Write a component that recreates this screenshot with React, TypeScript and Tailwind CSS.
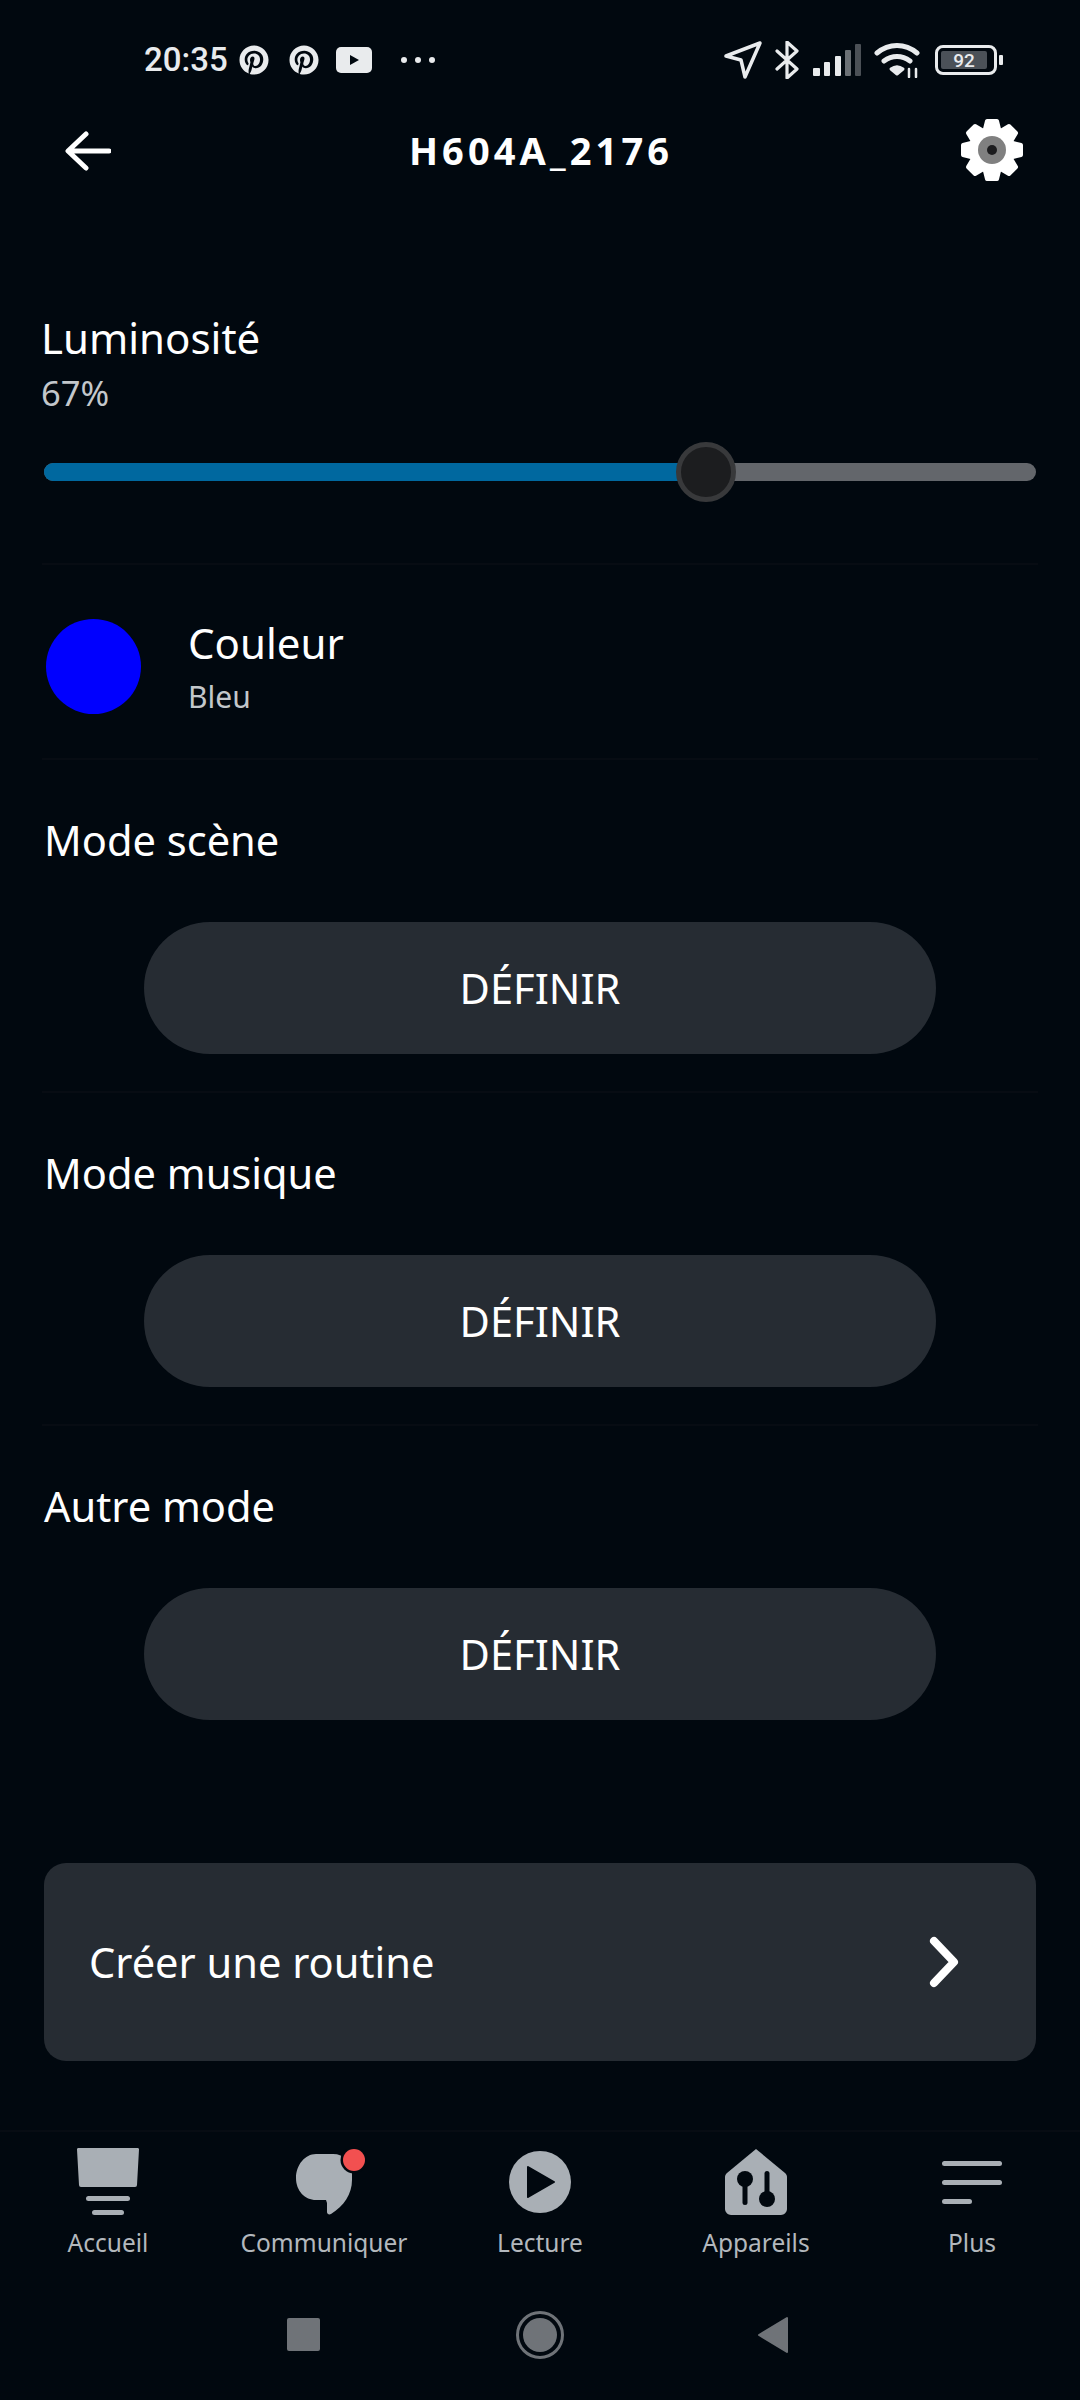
import { FaPinterest } from 'react-icons/fa'

const UI_FONT = "font-['Noto_Sans',sans-serif]"

function StatusBar() {
  return (
    <div className="h-[90px] pt-[30px] flex items-center text-[#e9ebed]">
      <span className="ml-[144px] w-[85px] font-['Roboto',sans-serif] font-medium text-[33px] leading-[60px]">20:35</span>
      <FaPinterest className="ml-[10px] w-[30px] h-[30px]" />
      <FaPinterest className="ml-[20px] w-[30px] h-[30px]" />
      <svg viewBox="0 0 36 26" className="ml-[17px] w-[36px] h-[26px]">
        <rect width="36" height="26" rx="5" fill="#e9ebed" />
        <path d="M14 8l9 5-9 5z" fill="#01080f" />
      </svg>
      <div className="ml-[29px] w-[34px] flex justify-between">
        <span className="w-[6px] h-[6px] rounded-full bg-[#e9ebed]" />
        <span className="w-[6px] h-[6px] rounded-full bg-[#e9ebed]" />
        <span className="w-[6px] h-[6px] rounded-full bg-[#e9ebed]" />
      </div>
      <svg viewBox="0 0 38 38" className="ml-[289px] w-[38px] h-[38px]" fill="none" stroke="#e9ebed" strokeWidth="3.5" strokeLinejoin="round">
        <path d="M2 15L36 2 21 36l-4-17z" />
      </svg>
      <svg viewBox="0 0 24 38" className="ml-[13px] w-[24px] h-[38px]" fill="none" stroke="#e9ebed" strokeWidth="3.2" strokeLinecap="round" strokeLinejoin="round">
        <path d="M2 10l20 18-10 9V1l10 9L2 28" />
      </svg>
      <svg viewBox="0 0 48 32" className="ml-[14px] w-[48px] h-[32px]">
        <rect x="0" y="24" width="7" height="8" rx="1" fill="#e9ebed" />
        <rect x="11" y="18" width="6" height="14" rx="1" fill="#e9ebed" />
        <rect x="22" y="12" width="6" height="20" rx="1" fill="#e9ebed" />
        <rect x="32" y="6" width="6" height="26" rx="1" fill="#6b7075" />
        <rect x="42" y="0" width="6" height="32" rx="1" fill="#4b5056" />
      </svg>
      <svg viewBox="0 0 46 36" className="ml-[13px] w-[46px] h-[36px]" fill="none" stroke="#e9ebed" strokeWidth="5" strokeLinecap="round">
        <path d="M3 11c12-10 28-10 40 0" />
        <path d="M10 19c8-6 18-6 26 0" />
        <path d="M17 27c4-3 8-3 12 0l-6 5z" fill="#e9ebed" strokeWidth="3" strokeLinejoin="round" />
        <path d="M35 27v8M42 27v8" strokeWidth="2.5" />
      </svg>
      <div className="ml-[15px] w-[62px] h-[30px] rounded-[8px] border-[3px] border-[#e9ebed] p-[3px] flex">
        <div className="w-[46px] bg-[#4b5158] rounded-[2px] flex items-center justify-center font-['Roboto',sans-serif] text-[#e9ebed] text-[19px] leading-none font-medium">92</div>
      </div>
      <span className="ml-[2px] w-[4px] h-[10px] rounded-[1px] bg-[#e9ebed]" />
    </div>
  )
}

function Gear() {
  const teeth = [0, 45, 90, 135, 180, 225, 270, 315]
  return (
    <svg viewBox="0 0 62 62" className="w-[62px] h-[62px]">
      {teeth.map((a) => (
        <path key={a} d="M26 2h10l3 12H23z" fill="#fff" stroke="#fff" strokeLinejoin="round" strokeWidth="4" transform={`rotate(${a} 31 31)`} />
      ))}
      <circle cx="31" cy="31" r="22" fill="#fff" />
      <circle cx="31" cy="31" r="14" fill="#808080" />
      <circle cx="31" cy="31" r="5" fill="#1c1c1e" />
    </svg>
  )
}

function Header() {
  return (
    <div className="h-[120px] pl-[65px] pr-[57px] flex items-center justify-between">
      <svg viewBox="0 0 46 40" className="w-[46px] h-[40px] mt-[2px]" fill="none" stroke="#fff" strokeWidth="5" strokeLinecap="round" strokeLinejoin="round">
        <path d="M44 20H4M21 3L3 20l18 17" />
      </svg>
      <h1 className="font-['Noto_Sans',sans-serif] text-white text-[38px] leading-none font-bold tracking-[4.1px] ml-[10px]">H604A_2176</h1>
      <Gear />
    </div>
  )
}

function Divider() {
  return <div className="h-[2px] mx-[42px] bg-[#070c13]" />
}

function Brightness() {
  return (
    <div className="h-[353px] px-[44px] pt-[103px]">
      <p className="-ml-[3px] text-white text-[42px] leading-[50px]">Luminosité</p>
      <p className="-ml-[3px] mt-[12px] text-[#c3c7cb] text-[34.5px] leading-[36px]">67%</p>
      <div className="relative mt-[52px] h-[18px] rounded-full bg-[#63666b]">
        <div className="h-full w-[660px] rounded-l-full bg-[#00689f]" />
        <div className="absolute left-[632px] top-[-21px] w-[60px] h-[60px] rounded-full bg-[#1c1d1f] border-[5px] border-[#38393b]" />
      </div>
    </div>
  )
}

function ColorRow() {
  return (
    <div className="h-[193px] pl-[46px] pt-[10px] flex items-center">
      <div className="w-[95px] h-[95px] rounded-full bg-[#0000ff]" />
      <div className="ml-[47px]">
        <p className="text-white text-[42px] leading-[50px]">Couleur</p>
        <p className="mt-[10px] text-[#c3c7cb] text-[30px] leading-[38px]">Bleu</p>
      </div>
    </div>
  )
}

function ModeSection({ title, last }: { title: string; last?: boolean }) {
  return (
    <div className={last ? 'pt-[50px]' : 'h-[331px] pt-[50px]'}>
      <p className="pl-[44px] text-white text-[41.6px] leading-[60px]">{title}</p>
      <button type="button" className="block mx-auto mt-[52px] w-[792px] h-[132px] rounded-full bg-[#262c33] text-white text-[41.6px]">
        DÉFINIR
      </button>
    </div>
  )
}

function NavItem({ label, children }: { label: string; children: React.ReactNode }) {
  return (
    <div className="flex flex-col items-center">
      <div className="h-[70px] flex items-center justify-center">{children}</div>
      <span className="mt-[10px] text-[#b3b8bd] text-[24.5px] leading-[32px]">{label}</span>
    </div>
  )
}

const NAV_GREY = '#a9afb5'

function BottomNav() {
  return (
    <div className="mt-[69px] h-[148px] border-t-2 border-[#070c13] pt-[15px] grid grid-cols-5">
      <NavItem label="Accueil">
        <svg viewBox="0 0 62 68" className="w-[62px] h-[68px]" fill={NAV_GREY}>
          <path d="M1.5 0h59a1.500 1.500 0 0 1 1.500 1.600L60 37a2 2 0 0 1-2 2H4a2 2 0 0 1-2-2L0 1.600A1.500 1.500 0 0 1 1.500 0z" />
          <rect x="9" y="48" width="44" height="5" rx="2.5" />
          <rect x="15" y="62" width="32" height="5" rx="2.5" />
        </svg>
      </NavItem>
      <NavItem label="Communiquer">
        <svg viewBox="0 0 70 66" className="w-[70px] h-[66px] ml-[14px]" fill={NAV_GREY}>
          <path d="M20 6h17c11 0 19 8 19 19v7c0 14-8 26-21 34-2 1-4 0-4-2v-9l-1-3H20C9 52 0 43 0 30S9 6 20 6z" transform="translate(0 -1)" />
          <circle cx="58" cy="11" r="13.500" fill="#01080f" />
          <circle cx="58" cy="11" r="11" fill="#f25050" />
        </svg>
      </NavItem>
      <NavItem label="Lecture">
        <svg viewBox="0 0 62 62" className="w-[62px] h-[62px]">
          <circle cx="31" cy="31" r="31" fill={NAV_GREY} />
          <path d="M19 16l26 15-26 15z" fill="#01080f" stroke="#01080f" strokeWidth="2" strokeLinejoin="round" />
        </svg>
      </NavItem>
      <NavItem label="Appareils">
        <svg viewBox="0 0 62 66" className="w-[62px] h-[66px]">
          <path d="M31 0l29 24c1 1 2 2 2 4v32c0 3-3 6-6 6H6c-3 0-6-3-6-6V28c0-2 1-3 2-4z" fill={NAV_GREY} />
          <circle cx="20" cy="30" r="8" fill="#01080f" />
          <rect x="17.500" y="30" width="5" height="26" rx="2.500" fill="#01080f" />
          <circle cx="42" cy="50" r="8" fill="#01080f" />
          <rect x="39.500" y="22" width="5" height="28" rx="2.500" fill="#01080f" />
        </svg>
      </NavItem>
      <NavItem label="Plus">
        <div className="w-[60px] flex flex-col gap-[14px]">
          <div className="h-[5px] rounded-full bg-[#a9afb5]" />
          <div className="h-[5px] rounded-full bg-[#a9afb5]" />
          <div className="h-[5px] w-[30px] rounded-full bg-[#a9afb5]" />
        </div>
      </NavItem>
    </div>
  )
}

function SystemNav() {
  return (
    <div className="relative flex-1">
      <div className="absolute left-[287px] top-[40px] w-[33px] h-[33px] rounded-[2px] bg-[#6f7378]" />
      <div className="absolute left-[516px] top-[33px] w-[48px] h-[48px] rounded-full border-[3px] border-[#6f7378] p-[4px]">
        <div className="w-full h-full rounded-full bg-[#6f7378]" />
      </div>
      <svg viewBox="0 0 32 38" className="absolute left-[757px] top-[38px] w-[32px] h-[38px]">
        <path d="M2 19L30 2v34z" fill="#6f7378" stroke="#6f7378" strokeWidth="2" strokeLinejoin="round" />
      </svg>
    </div>
  )
}

export default function App() {
  return (
    <div className={`w-[1080px] h-[2400px] flex flex-col bg-[#01080f] ${UI_FONT}`}>
      <StatusBar />
      <Header />
      <Brightness />
      <Divider />
      <ColorRow />
      <Divider />
      <ModeSection title="Mode scène" />
      <Divider />
      <ModeSection title="Mode musique" />
      <Divider />
      <ModeSection title="Autre mode" last />
      <div className="mt-[143px] mx-[44px] h-[198px] pl-[45px] pr-[76px] rounded-[22px] bg-[#262c33] flex items-center justify-between">
        <span className="text-white text-[41.6px] leading-[50px]">Créer une routine</span>
        <svg viewBox="0 0 32 52" className="w-[32px] h-[52px]" fill="none" stroke="#fff" strokeWidth="8" strokeLinecap="round" strokeLinejoin="round">
          <path d="M6 5l20 21L6 47" />
        </svg>
      </div>
      <BottomNav />
      <SystemNav />
    </div>
  )
}
